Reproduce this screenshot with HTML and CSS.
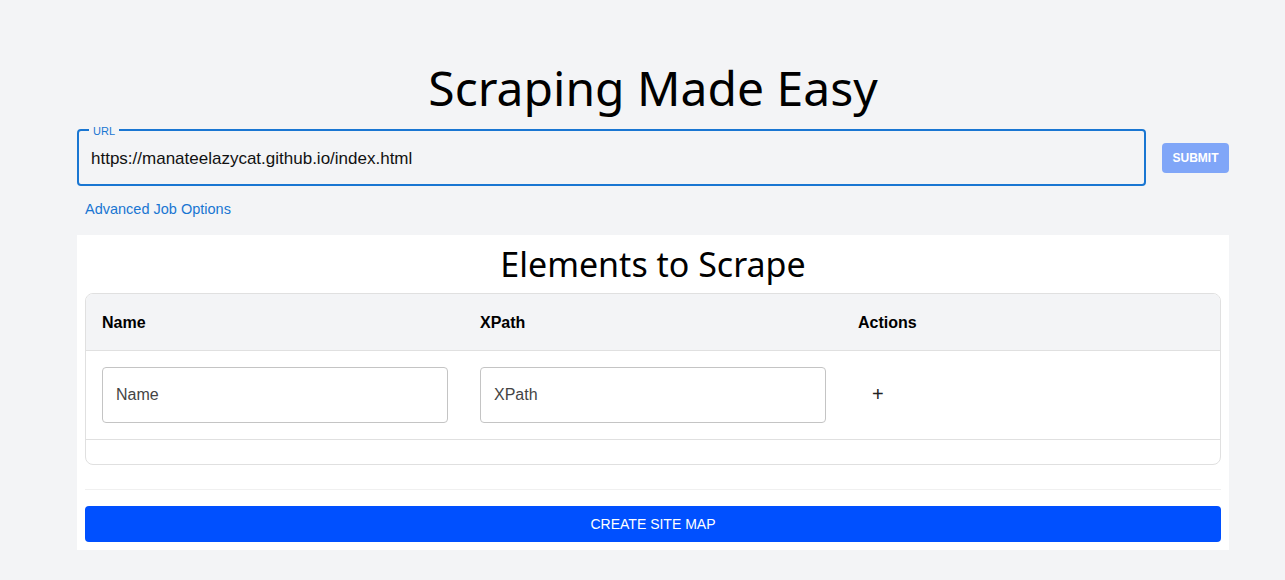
FILE: index.html
```html
<html>
    <head>
        <meta charset="UTF-8">
        <title>Scraping Made Easy</title>
        <link rel="stylesheet" href="styles.css">
    </head>
    <body>
        <div id="container">
            <h1 class="title">Scraping Made Easy</h1>
            <div class="url-row">
                <fieldset class="url-field">
                    <legend>URL</legend>
                    <input type="text" value="https://manateelazycat.github.io/index.html">
                </fieldset>
                <button class="submit">SUBMIT</button>
            </div>
            <a class="advanced" href="#">Advanced Job Options</a>
            <div class="panel">
                <h2 class="subtitle">Elements to Scrape</h2>
                <div class="table-wrap">
                    <table>
                        <tr class="head"><th>Name</th><th>XPath</th><th>Actions</th></tr>
                        <tr class="entry">
                            <td><input class="cell-input" type="text" placeholder="Name"></td>
                            <td><input class="cell-input" type="text" placeholder="XPath"></td>
                            <td><span class="plus">+</span></td>
                        </tr>
                        <tr class="empty"><td colspan="3"></td></tr>
                    </table>
                </div>
                <hr class="divider">
                <button class="create">CREATE SITE MAP</button>
            </div>
        </div>
    </body>
</html>
```
FILE: styles.css
```css
body {
    margin: 0;
    background-color: #f3f4f6;
    font-family: "Liberation Sans", Arial, sans-serif;
    color: #000;
}
#container {
    width: 1152px;
    margin-left: 77px;
    padding-top: 58px;
}
.title {
    margin: 0;
    height: 72px;
    font-family: "Noto Sans", sans-serif;
    font-weight: 400;
    font-size: 48px;
    line-height: 60px;
    text-align: center;
}
.url-row {
    display: flex;
    align-items: flex-start;
    gap: 16px;
}
.url-field {
    flex: 1;
    margin: 0;
    padding: 0 12px;
    box-sizing: border-box;
    border: 2px solid #1976d2;
    border-radius: 4px;
    position: relative;
    top: -5px;
    height: 61px;
}
.url-field legend {
    font-size: 11px;
    color: #1976d2;
    padding: 0 4px;
    margin-left: -2px;
    line-height: 10px;
    position: relative;
    top: 1px;
}
.url-field input {
    border: none;
    outline: none;
    background: transparent;
    width: 100%;
    font-family: "Liberation Sans", Arial, sans-serif;
    font-size: 17px;
    color: #111;
    padding: 0;
    margin-top: 12px;
    height: 24px;
}
.submit {
    margin-top: 13px;
    width: 67px;
    height: 30px;
    border: none;
    border-radius: 4px;
    background-color: #80a6f8;
    color: #fff;
    font-family: "Liberation Sans", Arial, sans-serif;
    font-weight: 700;
    font-size: 12px;
    padding: 0;
}
.advanced {
    display: block;
    margin: 10px 0 0 8px;
    height: 34px;
    color: #1976d2;
    font-size: 14.5px;
    text-decoration: none;
}
.panel {
    background-color: #fff;
    padding: 8px 8px 8px 8px;
}
.subtitle {
    margin: 0;
    font-family: "Noto Sans", sans-serif;
    font-weight: 400;
    font-size: 34px;
    line-height: 42px;
    text-align: center;
    height: 50px;
}
.table-wrap {
    border: 1px solid #e0e0e0;
    border-radius: 8px;
    overflow: hidden;
}
table {
    width: 100%;
    border-collapse: collapse;
    table-layout: fixed;
}
th {
    text-align: left;
    font-size: 16px;
    font-weight: 700;
    height: 56px;
    padding: 2px 16px 0 16px;
    background-color: #f3f4f6;
    border-bottom: 1px solid #e0e0e0;
}
.entry td {
    padding: 16px;
    height: 56px;
    border-bottom: 1px solid #e0e0e0;
}
.cell-input {
    width: 100%;
    height: 56px;
    box-sizing: border-box;
    border: 1px solid #c4c4c4;
    border-radius: 4px;
    padding: 0 13px;
    font-family: "Liberation Sans", Arial, sans-serif;
    font-size: 16px;
}
.cell-input::placeholder {
    color: #444;
}
.plus {
    display: inline-block;
    margin-left: 14px;
    font-size: 20px;
    color: #222;
}
.empty td {
    height: 25px;
}
.divider {
    border: none;
    border-top: 1px solid #f0f0f0;
    margin: 24px 0 16px 0;
}
.create {
    display: block;
    width: 100%;
    height: 36px;
    border: none;
    border-radius: 4px;
    background-color: #0050ff;
    color: #fff;
    font-family: "Liberation Sans", Arial, sans-serif;
    font-size: 14px;
}
```
